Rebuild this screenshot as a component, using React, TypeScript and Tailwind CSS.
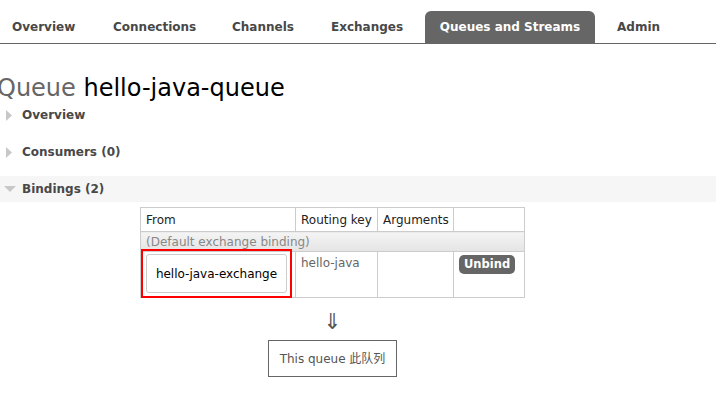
function Tri({ down }: { down?: boolean }) {
  return down ? (
    <svg width="12" height="7" viewBox="0 0 12 7" className="shrink-0">
      <polygon points="0,0 12,0 6,6" fill="#c8c8c8" />
    </svg>
  ) : (
    <svg width="7" height="11" viewBox="0 0 7 11" className="shrink-0">
      <polygon points="0,0 6,5.5 0,11" fill="#c8c8c8" />
    </svg>
  );
}

export default function App() {
  const tabs = [
    { label: "Overview", cls: "ml-[12px] w-[101px]" },
    { label: "Connections", cls: "w-[119px]" },
    { label: "Channels", cls: "w-[99px]" },
    { label: "Exchanges", cls: "w-[94px]" },
  ];
  const font = { fontFamily: '"DejaVu Sans", Verdana, "Noto Sans CJK SC", sans-serif' };

  return (
    <div className="w-[716px] h-[395px] overflow-hidden bg-white text-[#484848]" style={font}>
      {/* Tab bar */}
      <div className="flex items-end h-[44px] border-b border-[#666]">
        {tabs.map((t) => (
          <div key={t.label} className={`${t.cls} h-[32px] flex items-center text-[12px] font-bold text-[#484848] whitespace-nowrap`}>
            {t.label}
          </div>
        ))}
        <div className="w-[170px] h-[32px] flex items-center justify-center bg-[#666] text-white text-[12px] font-bold rounded-t-[6px] whitespace-nowrap">
          Queues and Streams
        </div>
        <div className="ml-[22px] h-[32px] flex items-center text-[12px] font-bold text-[#484848]">Admin</div>
      </div>

      {/* Heading */}
      <h1 className="mt-[29px] -ml-[3px] text-[24px] leading-[30px] text-black whitespace-nowrap">
        <span className="text-[#666]">Queue</span> hello-java-queue
      </h1>

      {/* Sections */}
      <div>
        <div className="flex items-center h-[24px] pl-[6px] gap-[9px] text-[12px] font-bold text-[#484848]">
          <Tri />Overview
        </div>
        <div className="flex items-center h-[24px] mt-[13px] pl-[6px] gap-[9px] text-[12px] font-bold text-[#484848]">
          <Tri />Consumers (0)
        </div>
        <div className="flex items-center h-[26px] mt-[12px] pl-[4px] gap-[6px] text-[12px] font-bold text-[#484848] bg-[#f6f6f6]">
          <Tri down />Bindings (2)
        </div>
      </div>

      {/* Bindings table */}
      <div className="ml-[140px] mt-[5px] w-[385px]">
        <table className="border-collapse text-[12px] w-full">
          <thead>
            <tr className="h-[24px] text-[#222]">
              <th className="border border-[#ccc] font-normal text-left pl-[5px] w-[155px]">From</th>
              <th className="border border-[#ccc] font-normal text-left pl-[5px] w-[82px]">Routing key</th>
              <th className="border border-[#ccc] font-normal text-left pl-[5px] w-[76px]">Arguments</th>
              <th className="border border-[#ccc] font-normal"></th>
            </tr>
          </thead>
          <tbody>
            <tr className="h-[20px]">
              <td colSpan={4} className="border border-[#ccc] pl-[5px] text-[#888] bg-gradient-to-b from-[#f4f4f4] to-[#e4e4e4] leading-[18px]">
                (Default exchange binding)
              </td>
            </tr>
            <tr className="h-[46px] align-top">
              <td className="border border-[#ccc] relative">
                <div className="absolute left-0 -top-[3px] w-[151px] h-[49px] border-2 border-[#f00] p-[3px]">
                  <div className="w-full h-full rounded-[3px] border border-[#ccc] bg-white flex items-center justify-center text-black text-[12px]">
                    hello-java-exchange
                  </div>
                </div>
              </td>
              <td className="border border-[#ccc] pl-[5px] pt-[2px] text-[#666]">hello-java</td>
              <td className="border border-[#ccc]"></td>
              <td className="border border-[#ccc] pl-[5px] pt-[3px]">
                <div className="inline-flex items-center h-[19px] px-[5px] rounded-[5px] bg-[#666] text-white font-bold text-[11.5px]">
                  Unbind
                </div>
              </td>
            </tr>
          </tbody>
        </table>
      </div>

      {/* Arrow and this queue */}
      <div className="flex flex-col items-center w-[665px] mt-[13px]">
        <div className="text-[22px] leading-[22px] text-[#555]">⇓</div>
        <div className="mt-[7px] w-[129px] h-[37px] border border-[#666] flex items-center justify-center text-[12px] text-[#555]">
          This queue 此队列
        </div>
      </div>
    </div>
  );
}
